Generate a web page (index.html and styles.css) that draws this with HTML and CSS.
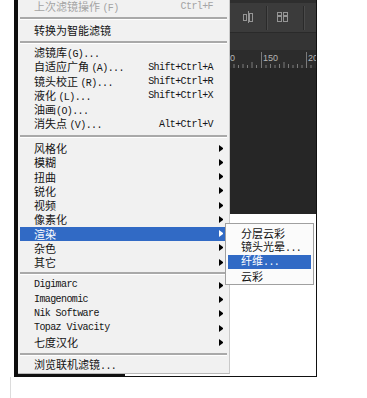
FILE: index.html
```html
<!DOCTYPE html>
<html>
<head>
<meta charset="utf-8">
<link rel="stylesheet" href="styles.css">
</head>
<body>
<div class="page">
  <div class="frame">
    <div class="row">
      <div class="menu">
        <div class="item dis"><span class="lbl">上次滤镜操作 <span class="k">(F)</span></span><span class="sc">Ctrl+F</span><span class="ar"></span></div>
        <div class="sep"></div>
        <div class="item"><span class="lbl">转换为智能滤镜</span><span class="ar"></span></div>
        <div class="sep"></div>
        <div class="item"><span class="lbl">滤镜库<span class="k">(G)...</span></span><span class="ar"></span></div>
        <div class="item"><span class="lbl">自适应广角 <span class="k">(A)...</span></span><span class="sc">Shift+Ctrl+A</span><span class="ar"></span></div>
        <div class="item"><span class="lbl">镜头校正 <span class="k">(R)...</span></span><span class="sc">Shift+Ctrl+R</span><span class="ar"></span></div>
        <div class="item"><span class="lbl">液化 <span class="k">(L)...</span></span><span class="sc">Shift+Ctrl+X</span><span class="ar"></span></div>
        <div class="item"><span class="lbl">油画<span class="k">(O)...</span></span><span class="ar"></span></div>
        <div class="item"><span class="lbl">消失点 <span class="k">(V)...</span></span><span class="sc">Alt+Ctrl+V</span><span class="ar"></span></div>
        <div class="sep"></div>
        <div class="item has"><span class="lbl">风格化</span><span class="ar"></span></div>
        <div class="item has"><span class="lbl">模糊</span><span class="ar"></span></div>
        <div class="item has"><span class="lbl">扭曲</span><span class="ar"></span></div>
        <div class="item has"><span class="lbl">锐化</span><span class="ar"></span></div>
        <div class="item has"><span class="lbl">视频</span><span class="ar"></span></div>
        <div class="item has"><span class="lbl">像素化</span><span class="ar"></span></div>
        <div class="item has on"><span class="lbl">渲染</span><span class="ar"></span>
          <div class="subm">
            <div class="item"><span class="lbl">分层云彩</span></div>
            <div class="item"><span class="lbl">镜头光晕<span class="k">...</span></span></div>
            <div class="item on"><span class="lbl">纤维<span class="k">...</span></span></div>
            <div class="item"><span class="lbl">云彩</span></div>
          </div>
        </div>
        <div class="item has"><span class="lbl">杂色</span><span class="ar"></span></div>
        <div class="item has"><span class="lbl">其它</span><span class="ar"></span></div>
        <div class="sep"></div>
        <div class="item has"><span class="lbl k">Digimarc</span><span class="ar"></span></div>
        <div class="item has"><span class="lbl k">Imagenomic</span><span class="ar"></span></div>
        <div class="item has"><span class="lbl k">Nik Software</span><span class="ar"></span></div>
        <div class="item has"><span class="lbl k">Topaz Vivacity</span><span class="ar"></span></div>
        <div class="item has"><span class="lbl">七度汉化</span><span class="ar"></span></div>
        <div class="sep"></div>
        <div class="item"><span class="lbl">浏览联机滤镜<span class="k">...</span></span><span class="ar"></span></div>
      </div>
      <div class="ps">
        <div class="dark">
          <svg class="tb" width="86" height="33" viewBox="0 0 86 33">
            <rect x="0" y="0" width="86" height="33" fill="#3b3b3b"/>
            <rect x="0" y="0" width="86" height="3" fill="#2e2e2e"/>
            <rect x="0" y="32" width="86" height="1" fill="#2a2a2a"/>
            <g stroke="#2a2a2a" stroke-width="1"><line x1="36.5" y1="6" x2="36.5" y2="30"/><line x1="73.5" y1="6" x2="73.5" y2="30"/></g>
            <g stroke="#4a4a4a" stroke-width="1"><line x1="37.5" y1="6" x2="37.5" y2="30"/><line x1="74.5" y1="6" x2="74.5" y2="30"/></g>
            <g fill="none" stroke="#959595" stroke-width="1">
              <rect x="13.5" y="14.5" width="3" height="6"/>
              <line x1="18.5" y1="11" x2="18.5" y2="23"/>
              <rect x="19.5" y="13.5" width="3" height="8"/>
              <rect x="47.5" y="12.5" width="4" height="3"/>
              <rect x="47.5" y="16.5" width="4" height="5"/>
              <rect x="53.5" y="12.5" width="4" height="3"/>
              <rect x="53.5" y="16.5" width="4" height="5"/>
            </g>
          </svg>
          <div class="opt"></div>
          <svg class="ruler" width="86" height="18" viewBox="0 0 86 18">
            <rect x="0" y="0" width="86" height="18" fill="#2c2c2c"/>
            <g stroke="#7a7a7a" stroke-width="1">
              <line x1="31.5" y1="2" x2="31.5" y2="18"/>
              <line x1="76.5" y1="2" x2="76.5" y2="18"/>
              <line x1="4" y1="14" x2="4" y2="18"/>
              <line x1="8.5" y1="15" x2="8.5" y2="18"/>
              <line x1="13" y1="14" x2="13" y2="18"/>
              <line x1="17.5" y1="15" x2="17.5" y2="18"/>
              <line x1="22" y1="12" x2="22" y2="18"/>
              <line x1="26.5" y1="15" x2="26.5" y2="18"/>
              <line x1="36" y1="15" x2="36" y2="18"/>
              <line x1="40.5" y1="14" x2="40.5" y2="18"/>
              <line x1="45" y1="15" x2="45" y2="18"/>
              <line x1="49.5" y1="14" x2="49.5" y2="18"/>
              <line x1="54" y1="12" x2="54" y2="18"/>
              <line x1="58.5" y1="14" x2="58.5" y2="18"/>
              <line x1="63" y1="15" x2="63" y2="18"/>
              <line x1="67.5" y1="14" x2="67.5" y2="18"/>
              <line x1="72" y1="15" x2="72" y2="18"/>
              <line x1="81" y1="15" x2="81" y2="18"/>
            </g>
            <g class="rl" fill="#b4b4b4">
              <text x="-10" y="11">100</text>
              <text x="33" y="11">150</text>
              <text x="78" y="11">200</text>
            </g>
          </svg>
          <div class="canvas"></div>
        </div>
      </div>
    </div>
    <div class="strip"><div class="shadow"></div></div>
  </div>
  <div class="below"></div>
</div>
</body>
</html>
```

FILE: styles.css
```css
* { box-sizing: border-box; }
body {
  margin: 0;
  background: #fff;
  font-family: "Noto Sans CJK SC", "Liberation Sans", sans-serif;
}
.page { padding-left: 14px; }
.frame {
  width: 303px;
  border-left: 4px solid #0d0d0d;
  border-right: 1px solid #111;
  border-bottom: 1px solid #111;
  background: #fff;
}
.row { display: flex; align-items: flex-start; }
.menu {
  width: 212px;
  height: 374px;
  background: #f1f1f1;
  padding: 0 4px 0 2px;
  border-right: 1px solid #c9c9c9;
  border-bottom: 1px solid #b9b9b9;
}
.item {
  position: relative;
  height: 14.25px;
  display: flex;
  align-items: center;
  padding-left: 14px;
  font-size: 11px;
  line-height: 14px;
  color: #141414;
  white-space: nowrap;
}
.lbl { flex: 1; }
.k, .sc {
  font-family: "Liberation Mono", monospace;
  font-size: 10px;
  letter-spacing: -0.6px;
}
.ar {
  width: 12px;
  height: 7px;
  display: flex;
  padding-left: 6px;
}
.has .ar::after {
  content: "";
  border-left: 4px solid #000;
  border-top: 3.5px solid transparent;
  border-bottom: 3.5px solid transparent;
}
.dis { color: #a4a4a4; }
.item.on { background: #316ac5; color: #fff; }
.item.on > .ar::after { border-left-color: #fff; }
.sep {
  height: 9px;
  padding-top: 3px;
  margin-right: -2px;
}
.sep::before {
  content: "";
  display: block;
  height: 2px;
  background: #a9a9a9;
  border-bottom: 1px solid #fff;
}
.subm {
  position: absolute;
  left: 205px;
  top: -3.5px;
  width: 89px;
  background: #fbfbfb;
  border: 1px solid #a0a0a0;
  padding: 2px 2px 1px 2px;
  z-index: 5;
}
.subm .item { padding-left: 13px; color: #141414; }
.subm .item.on { color: #fff; }
.ps { width: 86px; }
.dark { display: flex; flex-direction: column; height: 214px; overflow: hidden; }
.tb, .ruler { display: block; flex: none; }
.opt { height: 17px; background: #343434; flex: none; }
.canvas { flex: 1; background: #262626; }
.rl { font-family: "Liberation Sans", sans-serif; font-size: 9px; }
.strip { height: 2px; display: flex; }
.shadow { width: 107px; background: #111; }
.below {
  margin-left: -4px;
  height: 21px;
  border-left: 1px solid #dcdcdc;
}
```
